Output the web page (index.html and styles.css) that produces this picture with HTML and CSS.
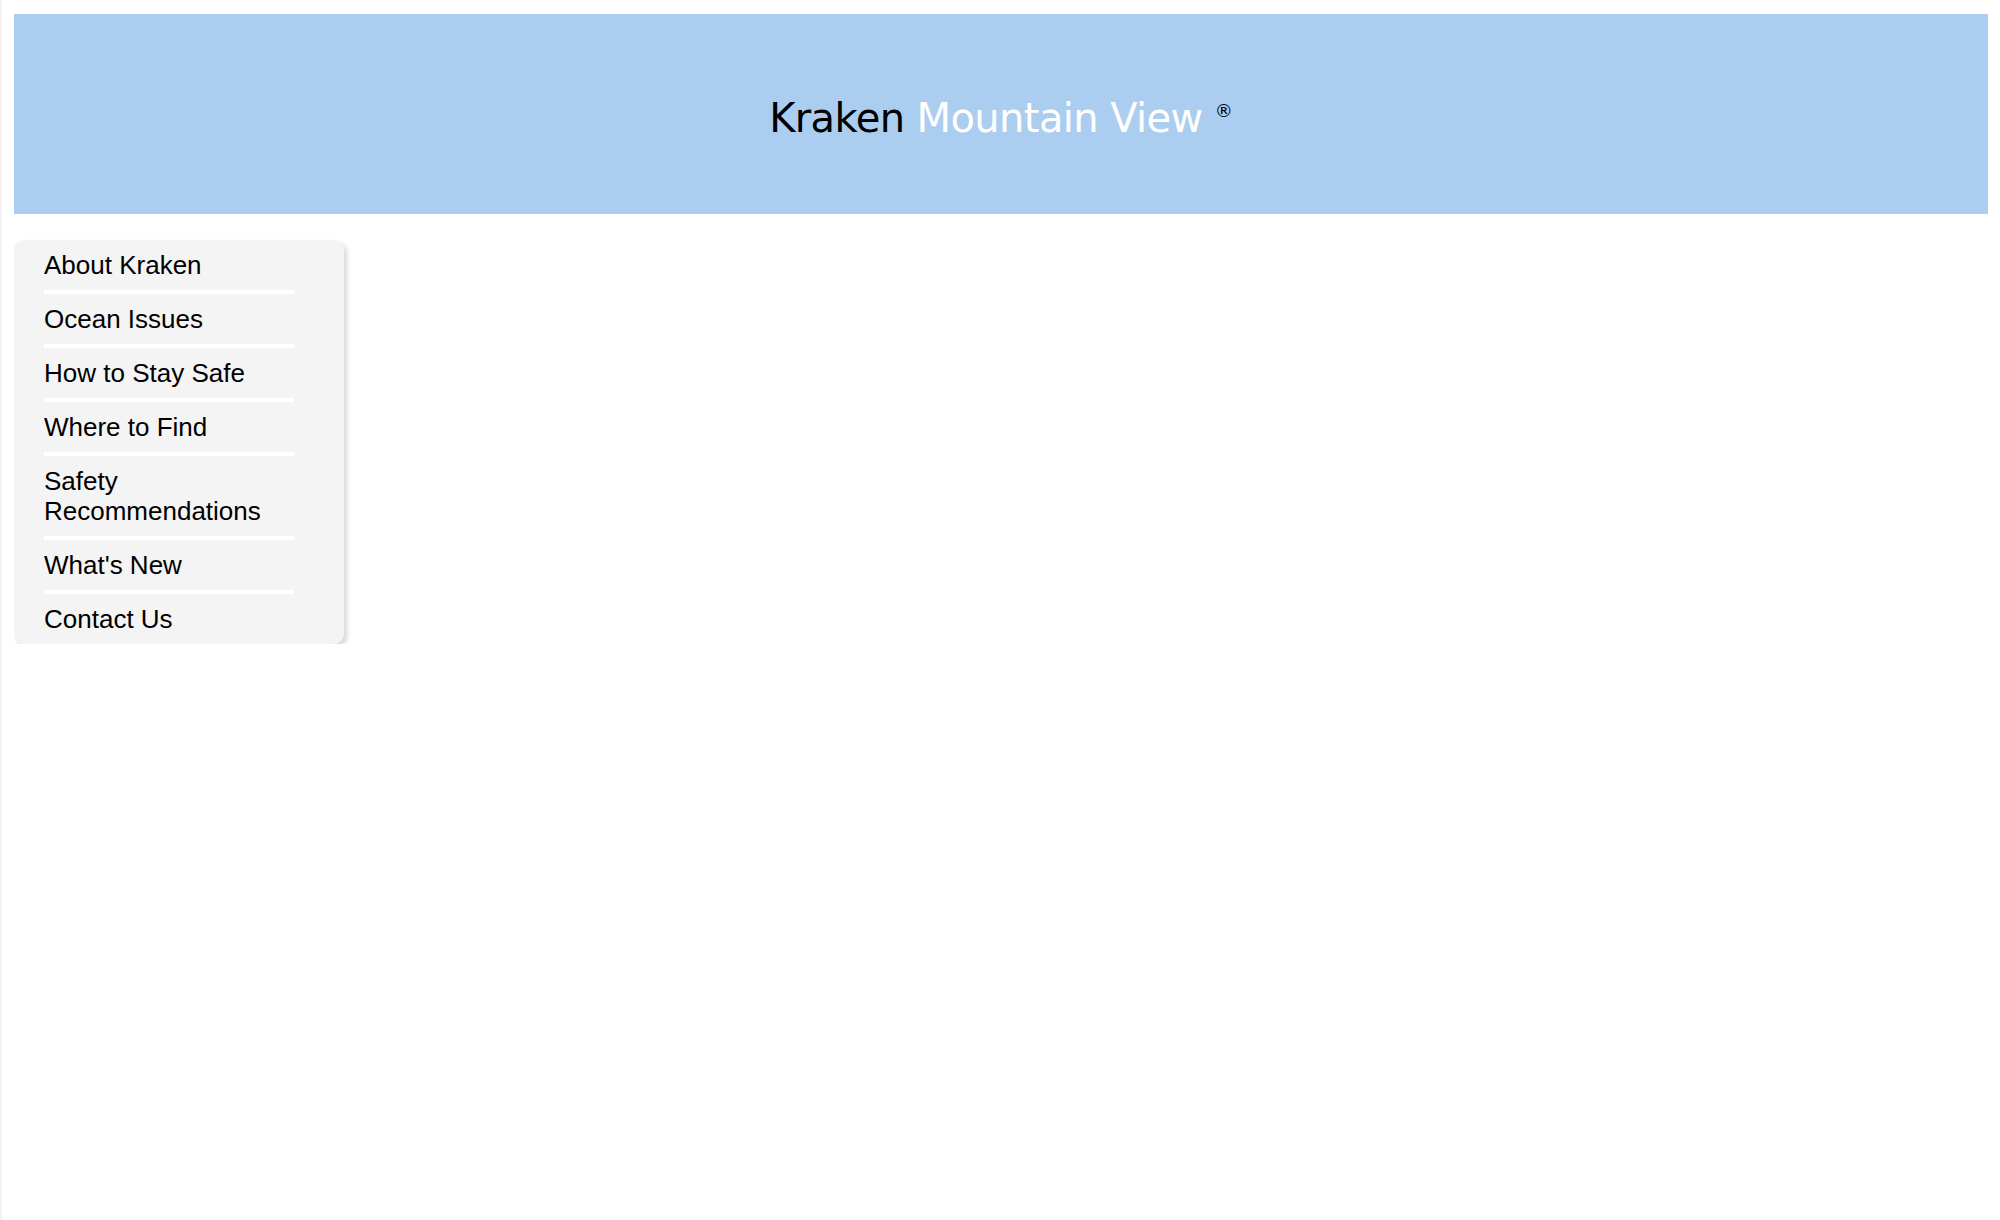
FILE: index.html
```html
<!DOCTYPE html>
<html lang="en">
<head>
<meta charset="utf-8">
<title>Kraken Mountain View</title>
<link rel="stylesheet" href="styles.css">
</head>
<body>
<header class="banner">
  <h1 class="brand"><span class="brand-dark">Kraken</span> <span class="brand-light">Mountain View</span> <sup class="reg">®</sup></h1>
</header>
<nav class="sidenav">
  <ul class="menu">
    <li class="menu-item">About Kraken</li>
    <li class="menu-item">Ocean Issues</li>
    <li class="menu-item">How to Stay Safe</li>
    <li class="menu-item">Where to Find</li>
    <li class="menu-item">Safety Recommendations</li>
    <li class="menu-item">What's New</li>
    <li class="menu-item">Contact Us</li>
  </ul>
</nav>
</body>
</html>
```
FILE: styles.css
```css
html {
  background: #ffffff;
  border-left: 2px solid #f2f2f2;
  min-height: 100%;
  box-sizing: border-box;
}
body {
  margin: 14px 12px 0 12px;
  font-family: "Liberation Sans", Arial, sans-serif;
  color: #000;
}
.banner {
  height: 200px;
  box-sizing: border-box;
  padding-top: 8px;
  background: #abcdef;
  display: flex;
  align-items: center;
  justify-content: center;
}
.brand {
  margin: 0;
  font-family: "DejaVu Sans", sans-serif;
  font-weight: normal;
  font-size: 40px;
  letter-spacing: -0.6px;
  line-height: 1.164;
}
.brand-dark { color: #000; }
.brand-light { color: #ffffff; }
.reg {
  font-size: 18px;
  line-height: 0;
  letter-spacing: 0;
  vertical-align: 15px;
  color: #000;
}
.sidenav {
  margin-top: 26px;
  width: 330px;
  background: #f4f4f4;
  border-radius: 10px;
  box-shadow: 3px 3px 5px rgba(0, 0, 0, 0.16);
}
.menu {
  list-style: none;
  margin: 0;
  padding: 0 50px 0 30px;
}
.menu-item {
  font-size: 26px;
  line-height: 30px;
  padding: 10px 0;
  border-bottom: 4px solid #ffffff;
}
.menu-item:last-child {
  border-bottom: none;
}
```
